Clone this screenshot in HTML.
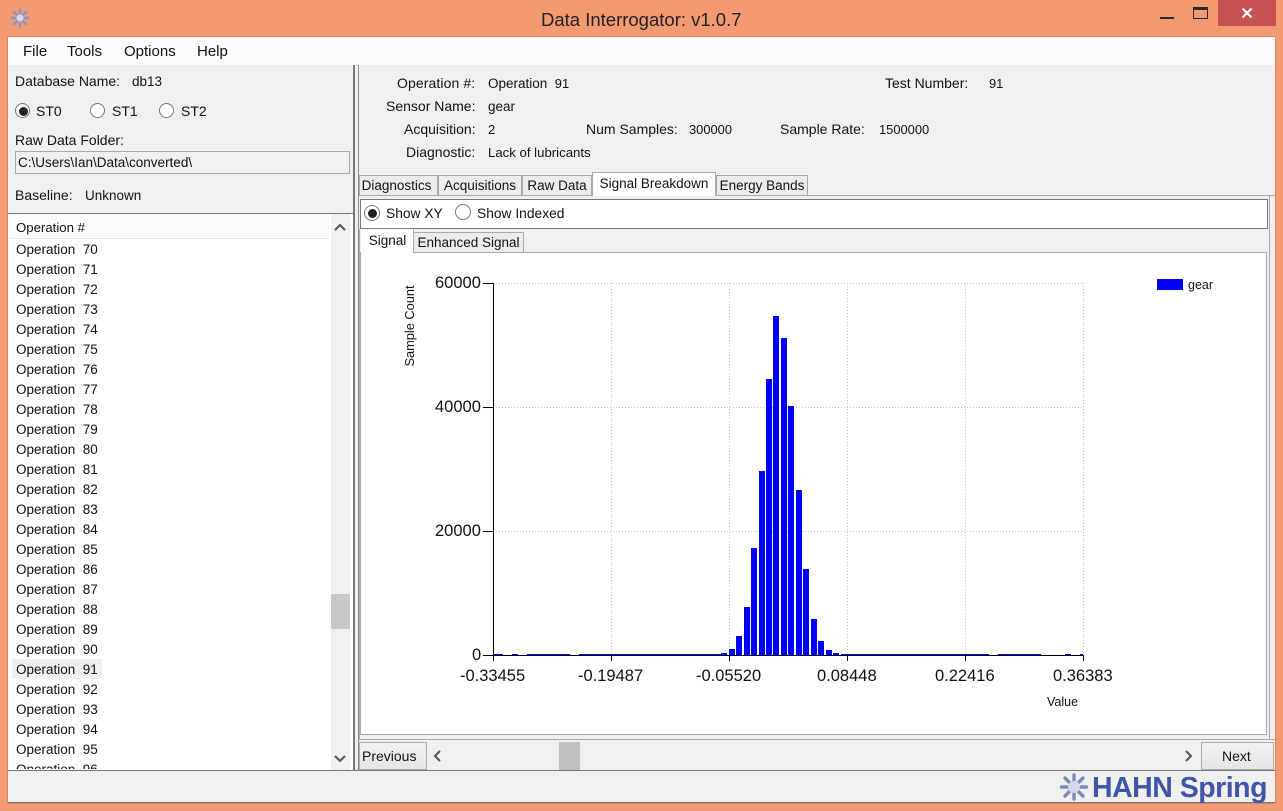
<!DOCTYPE html>
<html><head><meta charset="utf-8"><title>Data Interrogator</title>
<style>
html,body{margin:0;padding:0;background:#f49a73;width:1283px;height:811px;overflow:hidden}
body{position:relative;font-family:"Liberation Sans",sans-serif;font-size:14px;color:#111}
.a{position:absolute;white-space:pre;line-height:16px}
.b{position:absolute;box-sizing:border-box}
.s{font-size:13.5px}
.m{font-size:14px}
.v{font-size:12.9px}
.l{position:absolute;left:16px;font-size:13.5px;line-height:16px;white-space:pre;color:#111}
.r{position:absolute;width:14px;height:14px;border:1px solid #777;border-radius:50%;background:#fff;box-sizing:border-box}
.r.on::after{content:"";position:absolute;left:2.5px;top:2.5px;width:9px;height:9px;background:#222;border-radius:50%}
.t{position:absolute;box-sizing:border-box;background:#ececec;border:1px solid #aaa;border-bottom:none;font-size:13.5px;text-align:center;white-space:pre}
.tk{font-size:16.5px;line-height:18px;position:absolute;color:#111;white-space:pre}
</style></head><body>

<!-- Title bar -->
<svg class="b" style="left:9px;top:7px" width="22" height="22" viewBox="0 0 22 22"><g stroke="#8d93bf" stroke-width="2.6" stroke-linecap="round"><path d="M11 2.5V19.5M3 11H19M5 5L17 17M17 5L5 17"/></g><circle cx="11" cy="11" r="3.6" fill="#d5d8e6"/></svg>
<div class="a" style="left:541px;top:9px;font-size:18.5px;line-height:22px;color:#222">Data Interrogator: v1.0.7</div>
<div class="b" style="left:1160px;top:17px;width:14px;height:2px;background:#2a2a2a"></div>
<div class="b" style="left:1193px;top:7px;width:15px;height:12px;border:1px solid #2a2a2a;border-top:3px solid #2a2a2a"></div>
<div class="b" style="left:1218px;top:0;width:58px;height:26px;background:#c75050"></div>
<svg class="b" style="left:1241px;top:7px" width="12" height="12" viewBox="0 0 12 12"><path d="M1.5 1.5L10.5 10.5M10.5 1.5L1.5 10.5" stroke="#fff" stroke-width="2.2"/></svg>

<!-- Window client -->
<div class="b" style="left:8px;top:37px;width:1267px;height:766px;background:#f0f0f0;outline:1px solid #c98a6c"></div>
<div class="b" style="left:8px;top:37px;width:1267px;height:28px;background:#fbfbf9"></div>
<div class="a" style="left:23px;top:44px;font-size:15px">File</div>
<div class="a" style="left:67px;top:44px;font-size:15px">Tools</div>
<div class="a" style="left:124px;top:44px;font-size:15px">Options</div>
<div class="a" style="left:197px;top:44px;font-size:15px">Help</div>

<!-- Left panel -->
<div class="a m" style="left:15px;top:73px">Database Name:</div>
<div class="a s" style="left:132px;top:74px">db13</div>
<div class="r on" style="left:15px;top:103px;width:15px;height:15px"></div>
<div class="a s" style="left:36px;top:103px;font-size:14px">ST0</div>
<div class="r" style="left:90px;top:103px;width:15px;height:15px"></div>
<div class="a s" style="left:112px;top:103px;font-size:14px">ST1</div>
<div class="r" style="left:159px;top:103px;width:15px;height:15px"></div>
<div class="a s" style="left:181px;top:103px;font-size:14px">ST2</div>
<div class="a m" style="left:15px;top:132px">Raw Data Folder:</div>
<div class="b" style="left:15px;top:151px;width:335px;height:23px;border:1px solid #a9a9a9;background:#f0f0f0"></div>
<div class="a s" style="left:18px;top:155px">C:\Users\Ian\Data\converted\</div>
<div class="a m" style="left:15px;top:187px">Baseline:</div>
<div class="a s" style="left:85px;top:188px">Unknown</div>

<!-- List -->
<div class="b" style="left:8px;top:213px;width:346px;height:558px;background:#fff;border-top:1px solid #777;overflow:hidden">
  <div class="b" style="left:1px;top:0;width:321px;height:25px;background:#fbfbfb;border-bottom:1px solid #dfe9f5"></div>
  <div class="a s" style="left:8px;top:6px;font-size:13.2px">Operation #</div>
  <div class="b" style="left:4px;top:445px;width:90px;height:20px;background:#f0f0f0"></div>
  <div class="b" style="left:323px;top:0;width:19px;height:557px;background:#f0f0f0"></div>
  <div class="b" style="left:323px;top:380px;width:19px;height:35px;background:#c8c8c8"></div>
  <svg class="b" style="left:325px;top:8px" width="14" height="10" viewBox="0 0 14 10"><path d="M2 8L7 3L12 8" fill="none" stroke="#555" stroke-width="2"/></svg>
  <svg class="b" style="left:325px;top:540px" width="14" height="10" viewBox="0 0 14 10"><path d="M2 2L7 7L12 2" fill="none" stroke="#555" stroke-width="2"/></svg>
  <div style="position:absolute;left:-8px;top:-213px;width:330px;height:770px">
  <div class="l" style="top:241px">Operation  70</div>
  <div class="l" style="top:261px">Operation  71</div>
  <div class="l" style="top:281px">Operation  72</div>
  <div class="l" style="top:301px">Operation  73</div>
  <div class="l" style="top:321px">Operation  74</div>
  <div class="l" style="top:341px">Operation  75</div>
  <div class="l" style="top:361px">Operation  76</div>
  <div class="l" style="top:381px">Operation  77</div>
  <div class="l" style="top:401px">Operation  78</div>
  <div class="l" style="top:421px">Operation  79</div>
  <div class="l" style="top:441px">Operation  80</div>
  <div class="l" style="top:461px">Operation  81</div>
  <div class="l" style="top:481px">Operation  82</div>
  <div class="l" style="top:501px">Operation  83</div>
  <div class="l" style="top:521px">Operation  84</div>
  <div class="l" style="top:541px">Operation  85</div>
  <div class="l" style="top:561px">Operation  86</div>
  <div class="l" style="top:581px">Operation  87</div>
  <div class="l" style="top:601px">Operation  88</div>
  <div class="l" style="top:621px">Operation  89</div>
  <div class="l" style="top:641px">Operation  90</div>
  <div class="l" style="top:661px">Operation  91</div>
  <div class="l" style="top:681px">Operation  92</div>
  <div class="l" style="top:701px">Operation  93</div>
  <div class="l" style="top:721px">Operation  94</div>
  <div class="l" style="top:741px">Operation  95</div>
  <div class="l" style="top:761px">Operation  96</div>
  </div>
  <div class="b" style="left:0;top:555px;width:323px;height:2px;background:#fff"></div>
</div>
<!-- bottom / splitter lines -->
<div class="b" style="left:8px;top:770px;width:1267px;height:1px;background:#777"></div>
<div class="b" style="left:8px;top:771px;width:1267px;height:32px;background:#f0f0f0;border-bottom:1px solid #777"></div>
<div class="b" style="left:353px;top:65px;width:2px;height:706px;background:#777"></div>
<div class="b" style="left:358px;top:65px;width:1px;height:706px;background:#8a8a8a"></div>

<!-- Info -->
<div class="a m" style="left:397px;top:75px;letter-spacing:0.1px">Operation #:</div>
<div class="a s" style="left:488px;top:76px">Operation  <span class="v">91</span></div>
<div class="a m" style="left:885px;top:75px">Test Number:</div>
<div class="a v" style="left:989px;top:76px">91</div>
<div class="a m" style="left:386px;top:98px">Sensor Name:</div>
<div class="a s" style="left:488px;top:99px">gear</div>
<div class="a m" style="left:404px;top:121px">Acquisition:</div>
<div class="a v" style="left:488px;top:122px">2</div>
<div class="a m" style="left:586px;top:121px">Num Samples:</div>
<div class="a v" style="left:689px;top:122px">300000</div>
<div class="a m" style="left:780px;top:121px">Sample Rate:</div>
<div class="a v" style="left:879px;top:122px">1500000</div>
<div class="a m" style="left:406px;top:144px">Diagnostic:</div>
<div class="a s" style="left:488px;top:145px;font-size:13.2px">Lack of lubricants</div>

<!-- Main tabs -->
<div class="b" style="left:359px;top:195px;width:916px;height:1px;background:#aaa"></div>
<div class="t" style="left:359px;top:175px;width:79px;height:20px;line-height:20px;padding-right:4px">Diagnostics</div>
<div class="t" style="left:438px;top:175px;width:84px;height:20px;line-height:20px">Acquisitions</div>
<div class="t" style="left:522px;top:175px;width:70px;height:20px;line-height:20px">Raw Data</div>
<div class="t" style="left:592px;top:172px;width:124px;height:24px;line-height:22px;background:#fff">Signal Breakdown</div>
<div class="t" style="left:716px;top:175px;width:92px;height:20px;line-height:20px">Energy Bands</div>

<!-- Tab page -->
<div class="b" style="left:360px;top:199px;width:908px;height:30px;background:#fff;border:1px solid #777"></div>
<div class="r on" style="left:364px;top:205px;width:16px;height:16px"></div>
<div class="a s" style="left:386px;top:206px;font-size:13.8px">Show XY</div>
<div class="r" style="left:455px;top:204px;width:16px;height:16px"></div>
<div class="a s" style="left:477px;top:206px;font-size:13.8px">Show Indexed</div>
<div class="b" style="left:360px;top:252px;width:907px;height:483px;background:#fff;border:1px solid #aaa"></div>
<div class="b" style="left:359px;top:229px;width:1px;height:510px;background:#aaa"></div>
<div class="b" style="left:1269px;top:196px;width:1px;height:544px;background:#aaa"></div>
<div class="b" style="left:359px;top:739px;width:916px;height:1px;background:#aaa"></div>
<div class="t" style="left:361px;top:229px;width:53px;height:24px;line-height:22px;background:#fff;border-color:#fff #aaa #fff #fff">Signal</div>
<div class="t" style="left:413px;top:232px;width:111px;height:20px;line-height:20px">Enhanced Signal</div>

<!-- Chart -->
<svg class="b" style="left:0;top:0" width="1283" height="811">
<g stroke="#c4c4c4" stroke-dasharray="1 2" fill="none">
<path d="M493 283.5H1083M493 407.5H1083M493 531.5H1083"/>
<path d="M611.5 283V655M729.5 283V655M847.5 283V655M965.5 283V655M1083.5 283V655"/>
</g>
<g fill="#0000ff">
<rect x="493" y="654" width="10" height="1.5"/><rect x="512" y="654" width="6" height="1.5"/><rect x="527" y="654" width="43" height="1.5"/><rect x="579" y="654" width="30" height="1.5"/><rect x="609" y="654" width="107" height="1.5"/>
<rect x="691" y="654" width="30" height="1.5"/>
<rect x="721" y="653" width="6" height="2"/>
<rect x="729" y="649" width="6" height="6"/>
<rect x="736" y="636" width="6" height="19"/>
<rect x="744" y="607" width="6" height="48"/>
<rect x="751" y="548" width="6" height="107"/>
<rect x="759" y="471" width="6" height="184"/>
<rect x="766" y="379" width="6" height="276"/>
<rect x="773" y="316" width="6" height="339"/>
<rect x="781" y="338" width="6" height="317"/>
<rect x="788" y="406" width="6" height="249"/>
<rect x="796" y="490" width="6" height="165"/>
<rect x="803" y="569" width="6" height="86"/>
<rect x="811" y="619" width="6" height="36"/>
<rect x="818" y="641" width="6" height="14"/>
<rect x="826" y="650" width="6" height="5"/>
<rect x="833" y="653" width="6" height="2"/>
<rect x="841" y="654" width="148" height="1.5"/><rect x="998" y="654" width="43" height="1.5"/><rect x="1065" y="654" width="6" height="1.5"/><rect x="1080" y="654" width="3" height="1.5"/>
<rect x="1157" y="279" width="26" height="11"/>
</g>
<g stroke="#000" stroke-width="1" fill="none">
<path d="M493.5 283V661M483 283.5H494M483 407.5H494M483 531.5H494M483 655.5H1084"/>
<path d="M611.5 655V661M729.5 655V661M847.5 655V661M965.5 655V661M1083.5 655V661"/>
</g>
<text x="414" y="326" transform="rotate(-90 414 326)" text-anchor="middle" font-family="Liberation Sans" font-size="12.8" fill="#111">Sample Count</text>
</svg>
<div class="tk" style="left:435px;top:274px">60000</div>
<div class="tk" style="left:435px;top:398px">40000</div>
<div class="tk" style="left:435px;top:522px">20000</div>
<div class="tk" style="left:472px;top:646px">0</div>
<div class="tk" style="left:460px;top:667px">-0.33455</div>
<div class="tk" style="left:578px;top:667px">-0.19487</div>
<div class="tk" style="left:696px;top:667px">-0.05520</div>
<div class="tk" style="left:817px;top:667px">0.08448</div>
<div class="tk" style="left:935px;top:667px">0.22416</div>
<div class="tk" style="left:1053px;top:667px">0.36383</div>
<div class="a" style="left:1047px;top:694px;font-size:12.5px">Value</div>
<div class="a" style="left:1188px;top:277px;font-size:12.5px">gear</div>

<!-- Bottom controls -->
<div class="b" style="left:359px;top:742px;width:68px;height:28px;background:linear-gradient(#f2f2f2,#e5e5e5);border:1px solid #acacac;font-size:14px;padding-left:2px;line-height:27px">Previous</div>
<svg class="b" style="left:431px;top:749px" width="12" height="14" viewBox="0 0 12 14"><path d="M9 2L4 7L9 12" fill="none" stroke="#555" stroke-width="2"/></svg>
<div class="b" style="left:559px;top:742px;width:21px;height:28px;background:#c0c0c0"></div>
<svg class="b" style="left:1183px;top:749px" width="12" height="14" viewBox="0 0 12 14"><path d="M3 2L8 7L3 12" fill="none" stroke="#555" stroke-width="2"/></svg>
<div class="b" style="left:1201px;top:742px;width:73px;height:28px;background:linear-gradient(#f2f2f2,#e5e5e5);border:1px solid #acacac;font-size:14px;padding-left:20px;line-height:27px">Next</div>

<!-- Logo -->
<svg class="b" style="left:1059px;top:772px" width="30" height="30" viewBox="0 0 30 30"><g stroke="#7f88bb" stroke-width="3.4" stroke-linecap="round"><path d="M15 3V27M2.5 15H27.5M6 6L24 24M24 6L6 24"/></g><circle cx="15" cy="15" r="6" fill="#d5d8e6"/></svg>
<div class="a" style="left:1092px;top:771px;font-size:28.5px;line-height:34px;font-weight:bold;color:#3f55a5;letter-spacing:-0.5px">HAHN Spring</div>
</body></html>
